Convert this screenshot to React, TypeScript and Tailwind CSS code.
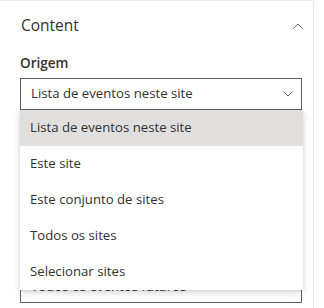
const options = [
  'Lista de eventos neste site',
  'Este site',
  'Este conjunto de sites',
  'Todos os sites',
  'Selecionar sites',
];

function Chevron({ up }: { up?: boolean }) {
  return (
    <svg width="10" height="6" viewBox="0 0 10 6" className="text-[#605e5c]">
      <path
        d={up ? 'M0.5 5.5 L5 1 L9.5 5.5' : 'M0.5 0.5 L5 5 L9.5 0.5'}
        fill="none"
        stroke="currentColor"
        strokeWidth="1"
      />
    </svg>
  );
}

export default function App() {
  return (
    <div className="h-[308px] w-[324px] overflow-hidden bg-white font-['Open_Sans',sans-serif] text-[#323130]">
      <div className="relative h-[308px] w-[314px] border-r border-t border-[#edebe9]">
        {/* Section header */}
        <div className="flex h-[44px] items-center justify-between pl-[21px] pr-[10px] pt-[6px]">
          <span className="text-[15.5px]">Content</span>
          <Chevron up />
        </div>

        <div className="pl-[20px] pr-[11px]">
          <div className="pt-[8px] text-[13.5px] font-semibold leading-[20px]">Origem</div>
          <div className="mt-[5px] flex h-[32px] items-center justify-between border border-[#605e5c] pl-[10px] pr-[8px] text-[13.2px]">
            <span>Lista de eventos neste site</span>
            <Chevron />
          </div>

          {/* second dropdown, mostly behind the menu */}
          <div className="mt-[161px] flex h-[32px] items-center justify-between border border-[#605e5c] pl-[10px] pr-[8px] text-[13.2px]">
            <span>Todos os eventos futuros</span>
            <Chevron />
          </div>
        </div>

        {/* open menu */}
        <div className="absolute left-[20px] top-[109px] w-[283px] bg-white shadow-[0_3px_8px_rgba(0,0,0,0.13),0_1px_3px_rgba(0,0,0,0.1)]">
          {options.map((o, i) => (
            <div
              key={o}
              className={
                i === 0
                  ? 'flex h-[36px] items-center bg-[#e1dfdd] pl-[10px] text-[13.2px]'
                  : 'flex h-[36px] items-center pl-[10px] text-[13.2px]'
              }
            >
              {o}
            </div>
          ))}
        </div>
      </div>
    </div>
  );
}
